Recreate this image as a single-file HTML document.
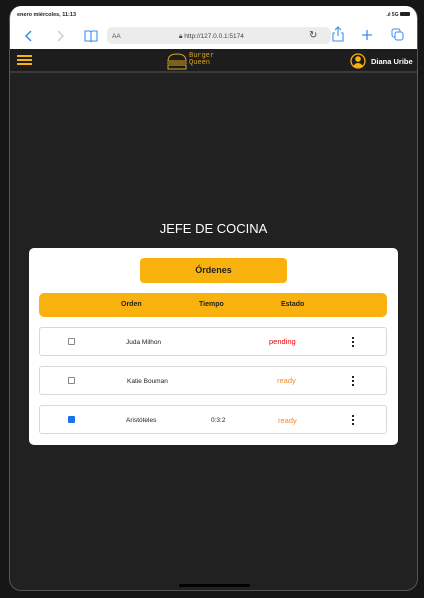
<!DOCTYPE html>
<html><head><meta charset="utf-8"><style>
*{margin:0;padding:0;box-sizing:border-box}
body{width:424px;height:598px;background:#161616;font-family:"Liberation Sans",sans-serif;position:relative;overflow:hidden}
.scr{position:absolute;left:9px;top:6px;width:409px;height:585px;border-radius:12px;overflow:hidden;background:#212121;border:1px solid #555;border-top:none}
.bar{position:absolute;left:0;top:0;width:100%;height:43px;background:#fff}
.st{position:absolute;left:7px;top:6px;font-size:5.5px;font-weight:bold;color:#222}
.url{position:absolute;left:97px;top:21px;width:224px;height:17px;background:#ececec;border-radius:5px;font-size:6.5px;color:#555}
.hd{position:absolute;left:0;top:43px;width:100%;height:24px;background:#1d1d1d;border-bottom:2px solid #3a3a3a}
.card{position:absolute;left:19px;top:242px;width:369px;height:197px;background:#fff;border-radius:5px}
.btn{position:absolute;left:111px;top:10px;width:147px;height:25px;background:#f9b20d;border-radius:4px;text-align:center;line-height:25px;font-size:9px;font-weight:bold;color:#222}
.th{position:absolute;left:10px;top:45px;width:348px;height:24px;background:#f9b20d;border-radius:5px;font-size:7px;font-weight:bold;color:#222}
.th span,.row span{position:absolute;top:0}
.row{position:absolute;left:10px;width:348px;height:29px;border:1px solid #d8d8d8;border-radius:3px;font-size:6.5px;color:#222}
.cb{position:absolute;left:28px;top:10px;width:7px;height:7px;border:1px solid #888;border-radius:1px}
.dots{position:absolute;left:312px;top:8px;width:2px;height:11px;background:radial-gradient(circle,#111 1px,transparent 1.2px) 0 0/2px 4px}
</style></head><body>
<div class="scr">
<div class="bar">
<div class="st">enero miércoles, 11:13</div>
<div style="position:absolute;right:7px;top:6px;font-size:5px;font-weight:bold;color:#222">.ıl 5G <span style="display:inline-block;width:10px;height:4px;background:#222;border-radius:1px"></span></div>
<svg style="position:absolute;left:14px;top:24px" width="10" height="12"><path d="M7 1L2 6l5 5" stroke="#3a8ef0" stroke-width="1.5" fill="none"/></svg>
<svg style="position:absolute;left:45px;top:24px" width="10" height="12"><path d="M3 1l5 5-5 5" stroke="#ccc" stroke-width="1.5" fill="none"/></svg>
<svg style="position:absolute;left:74px;top:24px" width="14" height="12"><path d="M1 1h5l1 1 1-1h5v10H8l-1 1-1-1H1z M7 2v9" stroke="#3a8ef0" stroke-width="1.1" fill="none"/></svg>
<div class="url"><span style="position:absolute;left:5px;top:6px">AA</span><span style="position:absolute;left:72px;top:6px;color:#444">🔒︎ http://127.0.0.1:5174</span><span style="position:absolute;left:202px;top:3px;font-size:10px;color:#444">↻</span></div>
<svg style="position:absolute;left:321px;top:20px" width="14" height="16"><path d="M7 1v9M4 4l3-3 3 3M4 7H2v8h10V7h-2" stroke="#3a8ef0" stroke-width="1.1" fill="none"/></svg>
<svg style="position:absolute;left:351px;top:23px" width="12" height="12"><path d="M6 1v10M1 6h10" stroke="#3a8ef0" stroke-width="1.3"/></svg>
<svg style="position:absolute;left:381px;top:22px" width="13" height="13"><rect x="1" y="1" width="8" height="8" rx="2" stroke="#3a8ef0" fill="none"/><rect x="4" y="4" width="8" height="8" rx="2" stroke="#3a8ef0" fill="#fff"/></svg>
</div>
<div class="hd">
<div style="position:absolute;left:7px;top:6px;width:15px;height:2px;background:#f9b20d;box-shadow:0 4px 0 #f9b20d,0 8px 0 #f9b20d"></div>
<svg style="position:absolute;left:156px;top:4px" width="22" height="18"><path d="M2 8Q2 1 11 1T20 8z" stroke="#d9a520" fill="none"/><path d="M1 10h20M2 12h18v4H2z" stroke="#d9a520" fill="none"/></svg>
<div style="position:absolute;left:179px;top:4px;font-size:7px;line-height:7px;color:#d9a520;font-family:'Liberation Mono',monospace">Burger<br>Queen</div>
<svg style="position:absolute;left:340px;top:4px" width="16" height="16"><circle cx="8" cy="8" r="7" stroke="#f9b20d" stroke-width="1.3" fill="none"/><circle cx="8" cy="6" r="2.8" fill="#f9b20d"/><path d="M3 13Q8 7 13 13Q8 16 3 13z" fill="#f9b20d"/></svg>
<div style="position:absolute;left:361px;top:8px;font-size:7.5px;font-weight:bold;color:#fff">Diana Uribe</div>
</div>
<div style="position:absolute;left:0;width:100%;top:215px;text-align:center;color:#fff;font-size:13px">JEFE DE COCINA</div>
<div class="card">
<div class="btn">Órdenes</div>
<div class="th"><span style="left:82px;top:8px">Orden</span><span style="left:160px;top:8px">Tiempo</span><span style="left:242px;top:8px">Estado</span></div>
<div class="row" style="top:79px"><div class="cb"></div><span style="left:86px;top:11px">Juda Milhon</span><span style="left:229px;top:9px;color:#e00;font-size:7.5px">pending</span><div class="dots"></div></div>
<div class="row" style="top:118px"><div class="cb"></div><span style="left:87px;top:11px">Katie Bouman</span><span style="left:237px;top:9px;color:#f28b2e;font-size:7.5px">ready</span><div class="dots"></div></div>
<div class="row" style="top:157px"><div class="cb" style="background:#1a73e8;border-color:#1a73e8"></div><span style="left:86px;top:11px">Aristóteles</span><span style="left:171px;top:11px">0:3:2</span><span style="left:238px;top:10px;color:#f28b2e;font-size:7.5px">ready</span><div class="dots"></div></div>
</div>
<div style="position:absolute;left:169px;top:578px;width:71px;height:3px;background:#000;border-radius:2px"></div>
</div>
</body></html>
